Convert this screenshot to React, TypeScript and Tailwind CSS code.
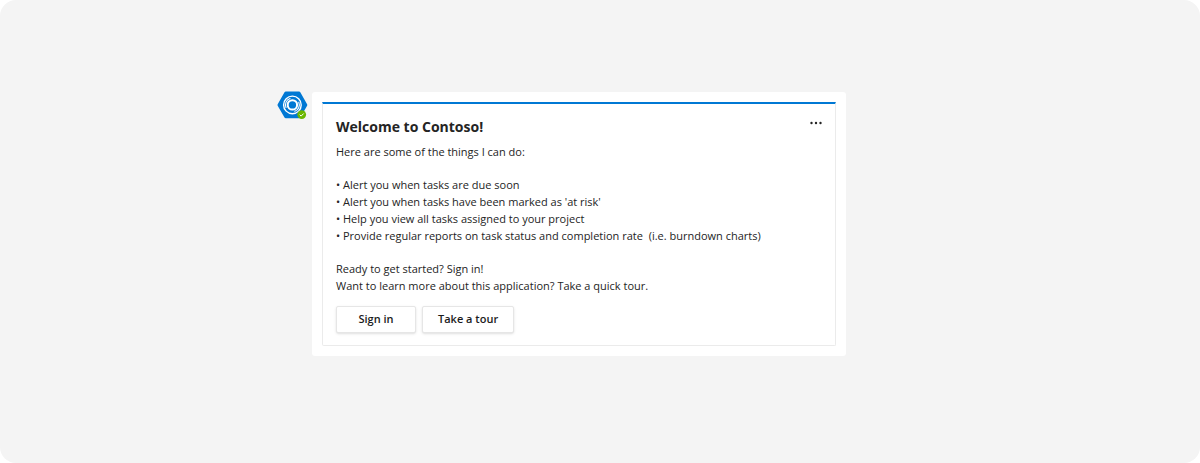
const features = [
  "Alert you when tasks are due soon",
  "Alert you when tasks have been marked as 'at risk'",
  "Help you view all tasks assigned to your project",
  "Provide regular reports on task status and completion rate\u00a0 (i.e. burndown charts)",
];

function BotAvatar() {
  return (
    <svg className="h-7 w-8 shrink-0 overflow-visible" viewBox="0 0 32 28" role="img" aria-label="Contoso bot, available">
      <path
        d="M9.800 1h13.200L29.800 12.900 23 24.800H9.800L3 12.900z"
        fill="#0078d4"
        stroke="#0078d4"
        strokeWidth="3"
        strokeLinejoin="round"
      />
      <circle cx="16.400" cy="12.900" r="8.800" fill="none" stroke="#fff" strokeWidth="1.400" />
      <circle cx="16.400" cy="12.900" r="4.700" fill="none" stroke="#fff" strokeWidth="2" />
      <path
        d="M10 15.500A6.800 6.800 0 0 1 14 6.500M22.800 10.300A6.800 6.800 0 0 1 18.800 19.300"
        fill="none"
        stroke="#fff"
        strokeWidth="1.100"
        strokeLinecap="round"
      />
      <circle cx="25.700" cy="22.600" r="4.400" fill="#6bb700" />
      <path d="m23.700 22.700 1.400 1.400 2.600-2.600" fill="none" stroke="#fff" strokeWidth="1" />
    </svg>
  );
}

function CardButton({ children }: { children: string }) {
  return (
    <button
      type="button"
      className="h-[27px] min-w-20 rounded-xs border border-[#e6e6e6] bg-white px-[15px] text-[11px] font-semibold text-[#1b1b1b] shadow-sm"
    >
      {children}
    </button>
  );
}

export default function App() {
  return (
    <main className="flex min-h-screen items-start justify-center rounded-2xl bg-[#f4f4f4] pt-[92px] pr-[94px] pb-8 pl-4 font-['Open_Sans','Noto_Sans',sans-serif] text-[#242424]">
      <div className="flex w-full max-w-[570px] items-start gap-1">
        <BotAvatar />
        <article className="flex-1 rounded-[3px] bg-white p-[10px]">
          <div className="rounded-b-xs border border-t-2 border-[#ebebeb] border-t-[#0078d4] px-[13px] pt-[11px] pb-3">
            <header className="flex items-start justify-between">
              <h1 className="text-sm leading-6 font-bold">Welcome to Contoso!</h1>
              <button type="button" aria-label="More options" className="flex h-4 items-center">
                <svg className="h-1 w-[14px]" viewBox="0 0 14 4" fill="currentColor">
                  <circle cx="3.500" cy="2" r="1.200" />
                  <circle cx="8" cy="2" r="1.200" />
                  <circle cx="12.500" cy="2" r="1.200" />
                </svg>
              </button>
            </header>
            <div className="mt-1 text-[11px] leading-[17px]">
              <p>Here are some of the things I can do:</p>
              <ul className="my-4">
                {features.map((f) => (
                  <li key={f}>• {f}</li>
                ))}
              </ul>
              <p>Ready to get started? Sign in!</p>
              <p>Want to learn more about this application? Take a quick tour.</p>
            </div>
            <div className="mt-3 flex gap-[6px]">
              <CardButton>Sign in</CardButton>
              <CardButton>Take a tour</CardButton>
            </div>
          </div>
        </article>
      </div>
    </main>
  );
}
